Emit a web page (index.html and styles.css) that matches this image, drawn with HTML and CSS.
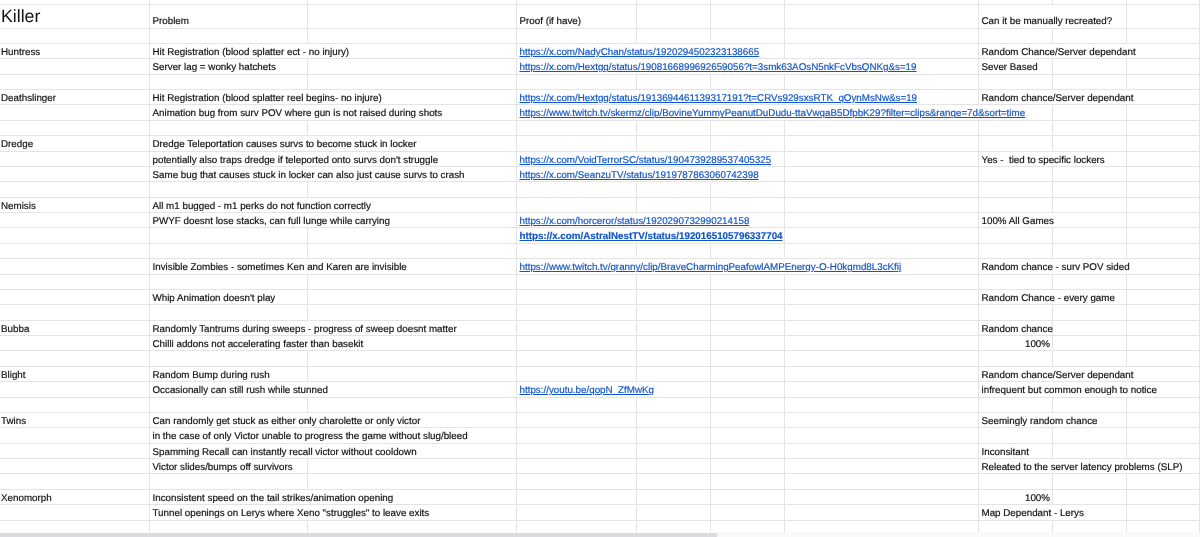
FILE: index.html
```html
<!DOCTYPE html>
<html lang="en">
<head>
<meta charset="utf-8">
<title>Killer</title>
<link rel="stylesheet" href="styles.css">
</head>
<body>
<main class="sheet">
  <div class="row top"><div class="c"></div><div class="c"></div><div class="c"></div><div class="c"></div><div class="c"></div><div class="c"></div><div class="c"></div><div class="c"></div><div class="c"></div><div class="c"></div></div>
  <div class="row head"><div class="c title">Killer</div><div class="c">Problem</div><div class="c"></div><div class="c">Proof (if have)</div><div class="c"></div><div class="c"></div><div class="c"></div><div class="c s2">Can it be manually recreated?</div><div class="c"></div></div>
  <div class="row"><div class="c"></div><div class="c"></div><div class="c"></div><div class="c"></div><div class="c"></div><div class="c"></div><div class="c"></div><div class="c"></div><div class="c"></div><div class="c"></div></div>

  <div class="row"><div class="c first">Huntress</div><div class="c s2">Hit Registration (blood splatter ect - no injury)</div><div class="c s3"><a href="#">https://x.com/NadyChan/status/1920294502323138665</a></div><div class="c"></div><div class="c s3">Random Chance/Server dependant</div></div>
  <div class="row"><div class="c"></div><div class="c">Server lag = wonky hatchets</div><div class="c"></div><div class="c s4"><a href="#">https://x.com/Hextgg/status/1908166899692659056?t=3smk63AOsN5nkFcVbsQNKg&amp;s=19</a></div><div class="c">Sever Based</div><div class="c"></div><div class="c"></div></div>
  <div class="row"><div class="c"></div><div class="c"></div><div class="c"></div><div class="c"></div><div class="c"></div><div class="c"></div><div class="c"></div><div class="c"></div><div class="c"></div><div class="c"></div></div>

  <div class="row"><div class="c first">Deathslinger</div><div class="c s2">Hit Registration (blood splatter reel begins- no injure)</div><div class="c s4"><a href="#">https://x.com/Hextgg/status/1913694461139317191?t=CRVs929sxsRTK_qOynMsNw&amp;s=19</a></div><div class="c s3">Random chance/Server dependant</div></div>
  <div class="row"><div class="c"></div><div class="c s2">Animation bug from surv POV where gun is not raised during shots</div><div class="c s5"><a href="#">https://www.twitch.tv/skermz/clip/BovineYummyPeanutDuDudu-ttaVwqaB5DfpbK29?filter=clips&amp;range=7d&amp;sort=time</a></div><div class="c"></div><div class="c"></div></div>
  <div class="row"><div class="c"></div><div class="c"></div><div class="c"></div><div class="c"></div><div class="c"></div><div class="c"></div><div class="c"></div><div class="c"></div><div class="c"></div><div class="c"></div></div>

  <div class="row"><div class="c first">Dredge</div><div class="c s2">Dredge Teleportation causes survs to become stuck in locker</div><div class="c"></div><div class="c"></div><div class="c"></div><div class="c"></div><div class="c"></div><div class="c"></div><div class="c"></div></div>
  <div class="row"><div class="c"></div><div class="c s2">potentially also traps dredge if teleported onto survs don't struggle</div><div class="c s3"><a href="#">https://x.com/VoidTerrorSC/status/1904739289537405325</a></div><div class="c"></div><div class="c s2">Yes -&nbsp; tied to specific lockers</div><div class="c"></div></div>
  <div class="row"><div class="c"></div><div class="c s2">Same bug that causes stuck in locker can also just cause survs to crash</div><div class="c s3"><a href="#">https://x.com/SeanzuTV/status/1919787863060742398</a></div><div class="c"></div><div class="c"></div><div class="c"></div><div class="c"></div></div>
  <div class="row"><div class="c"></div><div class="c"></div><div class="c"></div><div class="c"></div><div class="c"></div><div class="c"></div><div class="c"></div><div class="c"></div><div class="c"></div><div class="c"></div></div>

  <div class="row"><div class="c first">Nemisis</div><div class="c s2">All m1 bugged - m1 perks do not function correctly</div><div class="c"></div><div class="c"></div><div class="c"></div><div class="c"></div><div class="c"></div><div class="c"></div><div class="c"></div></div>
  <div class="row"><div class="c"></div><div class="c s2">PWYF doesnt lose stacks, can full lunge while carrying</div><div class="c s3"><a href="#">https://x.com/horceror/status/1920290732990214158</a></div><div class="c"></div><div class="c s2">100% All Games</div><div class="c"></div></div>
  <div class="row"><div class="c"></div><div class="c"></div><div class="c"></div><div class="c s3"><a class="strong" href="#">https://x.com/AstralNestTV/status/1920165105796337704</a></div><div class="c"></div><div class="c"></div><div class="c"></div><div class="c"></div></div>
  <div class="row"><div class="c"></div><div class="c"></div><div class="c"></div><div class="c"></div><div class="c"></div><div class="c"></div><div class="c"></div><div class="c"></div><div class="c"></div><div class="c"></div></div>

  <div class="row"><div class="c"></div><div class="c s2">Invisible Zombies - sometimes Ken and Karen are invisible</div><div class="c s4"><a href="#">https://www.twitch.tv/granny/clip/BraveCharmingPeafowlAMPEnergy-O-H0kgmd8L3cKfij</a></div><div class="c s3">Random chance - surv POV sided</div></div>
  <div class="row"><div class="c"></div><div class="c"></div><div class="c"></div><div class="c"></div><div class="c"></div><div class="c"></div><div class="c"></div><div class="c"></div><div class="c"></div><div class="c"></div></div>

  <div class="row"><div class="c"></div><div class="c">Whip Animation doesn't play</div><div class="c"></div><div class="c"></div><div class="c"></div><div class="c"></div><div class="c"></div><div class="c s2">Random Chance - every game</div><div class="c"></div></div>
  <div class="row"><div class="c"></div><div class="c"></div><div class="c"></div><div class="c"></div><div class="c"></div><div class="c"></div><div class="c"></div><div class="c"></div><div class="c"></div><div class="c"></div></div>

  <div class="row"><div class="c first">Bubba</div><div class="c s2">Randomly Tantrums during sweeps - progress of sweep doesnt matter</div><div class="c"></div><div class="c"></div><div class="c"></div><div class="c"></div><div class="c">Random chance</div><div class="c"></div><div class="c"></div></div>
  <div class="row"><div class="c"></div><div class="c s2">Chilli addons not accelerating faster than basekit</div><div class="c"></div><div class="c"></div><div class="c"></div><div class="c"></div><div class="c num">100%</div><div class="c"></div><div class="c"></div></div>
  <div class="row"><div class="c"></div><div class="c"></div><div class="c"></div><div class="c"></div><div class="c"></div><div class="c"></div><div class="c"></div><div class="c"></div><div class="c"></div><div class="c"></div></div>

  <div class="row"><div class="c first">Blight</div><div class="c">Random Bump during rush</div><div class="c"></div><div class="c"></div><div class="c"></div><div class="c"></div><div class="c"></div><div class="c s3">Random chance/Server dependant</div></div>
  <div class="row"><div class="c"></div><div class="c s2">Occasionally can still rush while stunned</div><div class="c s2"><a href="#">https://youtu.be/qopN_ZfMwKg</a></div><div class="c"></div><div class="c"></div><div class="c s3">infrequent but common enough to notice</div></div>
  <div class="row"><div class="c"></div><div class="c"></div><div class="c"></div><div class="c"></div><div class="c"></div><div class="c"></div><div class="c"></div><div class="c"></div><div class="c"></div><div class="c"></div></div>

  <div class="row"><div class="c first">Twins</div><div class="c s2">Can randomly get stuck as either only charolette or only victor</div><div class="c"></div><div class="c"></div><div class="c"></div><div class="c"></div><div class="c s2">Seemingly random chance</div><div class="c"></div></div>
  <div class="row"><div class="c"></div><div class="c s2">in the case of only Victor unable to progress the game without slug/bleed</div><div class="c"></div><div class="c"></div><div class="c"></div><div class="c"></div><div class="c"></div><div class="c"></div><div class="c"></div></div>
  <div class="row"><div class="c"></div><div class="c s2">Spamming Recall can instantly recall victor without cooldown</div><div class="c"></div><div class="c"></div><div class="c"></div><div class="c"></div><div class="c">Inconsitant</div><div class="c"></div><div class="c"></div></div>
  <div class="row"><div class="c"></div><div class="c">Victor slides/bumps off survivors</div><div class="c"></div><div class="c"></div><div class="c"></div><div class="c"></div><div class="c"></div><div class="c s3">Releated to the server latency problems (SLP)</div></div>
  <div class="row"><div class="c"></div><div class="c"></div><div class="c"></div><div class="c"></div><div class="c"></div><div class="c"></div><div class="c"></div><div class="c"></div><div class="c"></div><div class="c"></div></div>

  <div class="row"><div class="c first">Xenomorph</div><div class="c s2">Inconsistent speed on the tail strikes/animation opening</div><div class="c"></div><div class="c"></div><div class="c"></div><div class="c"></div><div class="c num">100%</div><div class="c"></div><div class="c"></div></div>
  <div class="row"><div class="c"></div><div class="c s2">Tunnel openings on Lerys where Xeno "struggles" to leave exits</div><div class="c"></div><div class="c"></div><div class="c"></div><div class="c"></div><div class="c s2">Map Dependant - Lerys</div><div class="c"></div></div>
  <div class="row end"><div class="c"></div><div class="c"></div><div class="c"></div><div class="c"></div><div class="c"></div><div class="c"></div><div class="c"></div><div class="c"></div><div class="c"></div><div class="c"></div></div>
</main>
<div class="scrollbar"><div class="thumb"></div></div>
</body>
</html>
```
FILE: styles.css
```css
html, body {
  margin: 0;
  height: 537px;
  overflow: hidden;
  background: #fff;
}

.sheet {
  height: 532px;
  overflow: hidden;
  font-family: "Liberation Sans", Arial, sans-serif;
  font-size: 9.8px;
  color: #111;
  text-rendering: geometricPrecision;
  -webkit-text-stroke: 0.18px currentColor;
  filter: blur(0.35px);
}

.row {
  display: grid;
  grid-template-columns: 150px 158px 209px 120px 74px 74px 194px 74px 74px 73px;
  grid-template-rows: minmax(0, 1fr);
  height: 15.375px;
  line-height: 16.4px;
}

.row.top { height: 4.5px; }
.row.head { height: 24px; }
.row.end { height: 12px; }

.c {
  box-sizing: border-box;
  min-width: 0;
  min-height: 0;
  padding: 1px 2px 0 2.5px;
  white-space: nowrap;
  border-right: 1.2px solid #e4e4e4;
  border-bottom: 1.2px solid #e4e4e4;
}

.row.end .c { border-bottom: 0; }

.s2 { grid-column: span 2; }
.s3 { grid-column: span 3; }
.s4 { grid-column: span 4; }
.s5 { grid-column: span 5; }

.first { padding-left: 1px; }

.num { text-align: right; }

.head .c { padding-top: 9px; }

.head .title {
  padding: 0 0 0 1px;
  font-size: 17.7px;
  line-height: 22px;
  -webkit-text-stroke: 0;
}

a {
  color: #1155cc;
  text-decoration: underline;
}

.strong { font-weight: 700; }

.scrollbar {
  height: 5px;
  background: #f8f9fa;
  padding-top: 1px;
  box-sizing: border-box;
}

.thumb {
  width: 717px;
  height: 4px;
  background: #dadce0;
}
```
